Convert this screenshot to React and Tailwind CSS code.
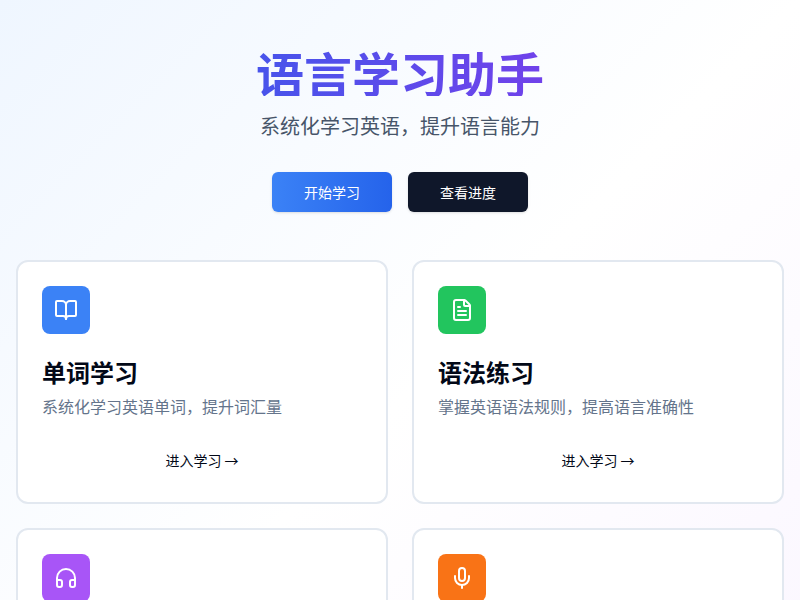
import { BookOpen, FileText, Headphones, Mic } from "lucide-react";

const cards = [
  { title: "单词学习", desc: "系统化学习英语单词，提升词汇量", color: "bg-[#3b82f6]", Icon: BookOpen },
  { title: "语法练习", desc: "掌握英语语法规则，提高语言准确性", color: "bg-[#22c55e]", Icon: FileText },
  { title: "听力训练", desc: "通过音频材料提升英语听力水平", color: "bg-[#a855f7]", Icon: Headphones },
  { title: "口语练习", desc: "练习英语口语发音，增强表达能力", color: "bg-[#f97316]", Icon: Mic },
];

function FeatureCard({ title, desc, color, Icon }) {
  return (
    <div className="h-[244px] rounded-xl border-2 border-[#e2e8f0] bg-white p-6">
      <div className={`flex h-12 w-12 items-center justify-center rounded-lg ${color}`}>
        <Icon className="h-6 w-6 text-white" strokeWidth={2} />
      </div>
      <h3 className="mt-6 text-2xl font-bold leading-7 text-[#020817]">{title}</h3>
      <p className="mt-2 text-base leading-6 text-[#64748b]">{desc}</p>
      <div className="mt-8 text-center text-sm leading-5 text-[#020817]">进入学习 →</div>
    </div>
  );
}

export default function App() {
  return (
    <div className="min-h-screen bg-linear-to-br/srgb from-[#eff6ff] via-white to-[#faf5ff] px-4 pb-8 pt-12 font-['Noto_Sans_CJK_SC',sans-serif]">
      <div className="text-center">
        <h1 className="bg-linear-to-r/srgb from-[#2563eb] to-[#9333ea] bg-clip-text text-5xl font-bold leading-[48px] text-transparent">
          语言学习助手
        </h1>
        <p className="mt-4 text-xl leading-7 text-[#475569]">系统化学习英语，提升语言能力</p>
        <div className="mt-8 flex justify-center gap-4">
          <button className="h-10 w-[120px] rounded-md bg-linear-to-r/srgb from-[#3b82f6] to-[#2563eb] text-sm text-white shadow-sm">
            开始学习
          </button>
          <button className="h-10 w-[120px] rounded-md bg-[#0f172a] text-sm text-white shadow-sm">查看进度</button>
        </div>
      </div>
      <div className="mt-12 grid grid-cols-2 gap-6">
        {cards.map((card) => (
          <FeatureCard key={card.title} {...card} />
        ))}
      </div>
    </div>
  );
}
